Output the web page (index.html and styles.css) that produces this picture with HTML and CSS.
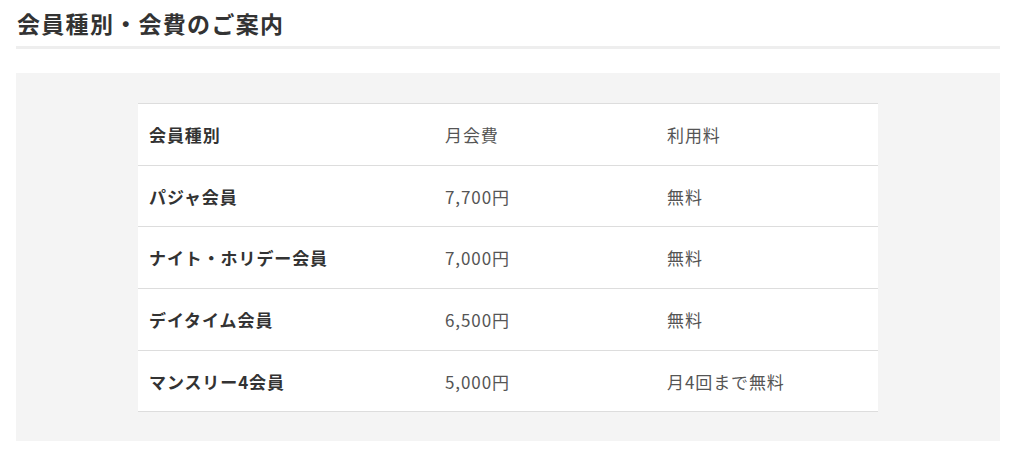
FILE: index.html
```html
<!DOCTYPE html>
<html lang="ja">
<head>
<meta charset="utf-8">
<link rel="stylesheet" href="styles.css">
</head>
<body>
<div class="wrap">
  <h2 class="title">会員種別・会費のご案内</h2>
  <div class="panel">
    <table class="fees">
      <colgroup><col class="c1"><col class="c2"><col class="c3"></colgroup>
      <tr><th>会員種別</th><td>月会費</td><td>利用料</td></tr>
      <tr><th>パジャ会員</th><td>7,700円</td><td>無料</td></tr>
      <tr><th>ナイト・ホリデー会員</th><td>7,000円</td><td>無料</td></tr>
      <tr><th>デイタイム会員</th><td>6,500円</td><td>無料</td></tr>
      <tr><th>マンスリー4会員</th><td>5,000円</td><td>月4回まで無料</td></tr>
    </table>
  </div>
</div>
</body>
</html>
```
FILE: styles.css
```css
html, body { margin: 0; padding: 0; background: #fff; }
body {
  font-family: "Noto Sans CJK JP", "Noto Sans", sans-serif;
  color: #333;
}
.wrap { margin: 0 24px 0 16px; }
.title {
  margin: 0;
  padding: 6px 0 6px 1px;
  font-size: 23px;
  line-height: 34px;
  font-weight: bold;
  letter-spacing: 1.3px;
  color: #333;
  border-bottom: 3px solid #eee;
}
.panel {
  margin-top: 24px;
  background: #f4f4f4;
  padding: 30px 0 29px;
}
.fees {
  width: 740px;
  margin: 0 auto;
  border-collapse: collapse;
  background: #fff;
  font-size: 17px;
  letter-spacing: 0.9px;
}
.c1 { width: 296px; }
.c2 { width: 222px; }
.c3 { width: 222px; }
.fees tr { height: 61.7px; }
.fees th, .fees td {
  border-top: 1px solid #ddd;
  border-bottom: 1px solid #ddd;
  padding: 0 11px;
  text-align: left;
  vertical-align: middle;
}
.fees th { font-weight: bold; color: #333; }
.fees td { font-weight: normal; color: #555; }
```
